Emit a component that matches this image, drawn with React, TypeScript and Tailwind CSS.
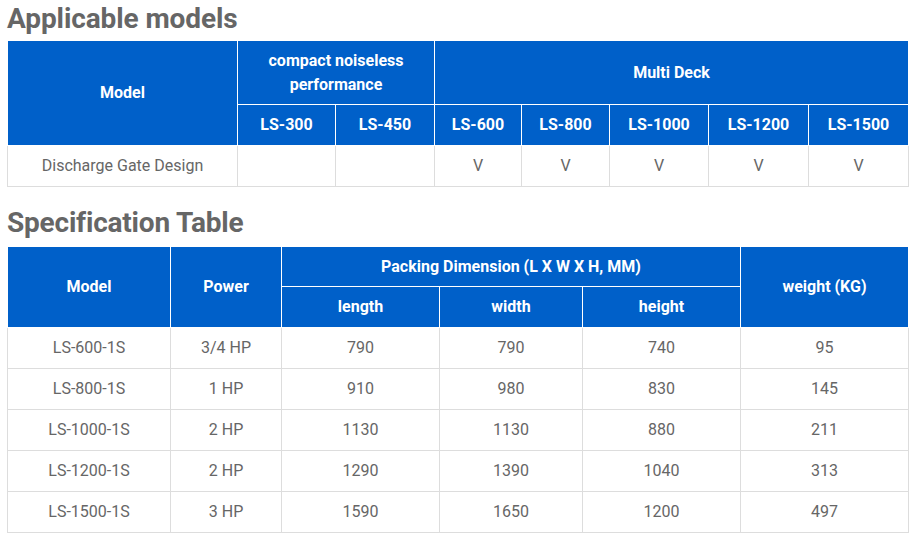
const th =
  "border border-white bg-[#0060c9] text-white font-bold text-[16px] leading-[24px] text-center align-middle px-2";
const td =
  "border border-[#dddddd] text-[#666666] text-[16px] leading-[24px] text-center align-middle px-2";

const models = ["LS-300", "LS-450", "LS-600", "LS-800", "LS-1000", "LS-1200", "LS-1500"];
const gate = ["", "", "V", "V", "V", "V", "V"];

const specs = [
  ["LS-600-1S", "3/4 HP", "790", "790", "740", "95"],
  ["LS-800-1S", "1 HP", "910", "980", "830", "145"],
  ["LS-1000-1S", "2 HP", "1130", "1130", "880", "211"],
  ["LS-1200-1S", "2 HP", "1290", "1390", "1040", "313"],
  ["LS-1500-1S", "3 HP", "1590", "1650", "1200", "497"],
];

export default function App() {
  return (
    <div className="min-h-screen bg-white px-[7px] pt-[2px] font-['Roboto',sans-serif]">
      {/* Applicable models */}
      <h2 className="text-[28px] leading-[34px] font-bold text-[#666666] tracking-[-0.1px] mb-[4px]">
        Applicable models
      </h2>
      <table className="w-[901px] table-fixed border-collapse border border-[#dddddd]">
        <colgroup>
          <col className="w-[230px]" />
          <col className="w-[98px]" />
          <col className="w-[99px]" />
          <col className="w-[87px]" />
          <col className="w-[88px]" />
          <col className="w-[99px]" />
          <col className="w-[100px]" />
          <col className="w-[100px]" />
        </colgroup>
        <thead>
          <tr className="h-[64px]">
            <th rowSpan={2} className={th}>
              Model
            </th>
            <th colSpan={2} className={th}>
              compact noiseless performance
            </th>
            <th colSpan={5} className={th}>
              Multi Deck
            </th>
          </tr>
          <tr className="h-[41px]">
            {models.map((m) => (
              <th key={m} className={th}>
                {m}
              </th>
            ))}
          </tr>
        </thead>
        <tbody>
          <tr className="h-[41px]">
            <td className={td}>Discharge Gate Design</td>
            {gate.map((g, i) => (
              <td key={i} className={td}>
                {g}
              </td>
            ))}
          </tr>
        </tbody>
      </table>

      {/* Specification Table */}
      <h2 className="text-[28px] leading-[34px] font-bold text-[#666666] tracking-[-0.2px] mt-[19px] mb-[6px]">
        Specification Table
      </h2>
      <table className="w-[901px] table-fixed border-collapse border border-[#dddddd]">
        <colgroup>
          <col className="w-[163px]" />
          <col className="w-[111px]" />
          <col className="w-[158px]" />
          <col className="w-[143px]" />
          <col className="w-[158px]" />
          <col className="w-[168px]" />
        </colgroup>
        <thead>
          <tr className="h-[40px]">
            <th rowSpan={2} className={th}>
              Model
            </th>
            <th rowSpan={2} className={th}>
              Power
            </th>
            <th colSpan={3} className={th}>
              Packing Dimension (L X W X H, MM)
            </th>
            <th rowSpan={2} className={th}>
              weight (KG)
            </th>
          </tr>
          <tr className="h-[41px]">
            <th className={th}>length</th>
            <th className={th}>width</th>
            <th className={th}>height</th>
          </tr>
        </thead>
        <tbody>
          {specs.map((row) => (
            <tr key={row[0]} className="h-[41px]">
              {row.map((c, i) => (
                <td key={i} className={td}>
                  {c}
                </td>
              ))}
            </tr>
          ))}
        </tbody>
      </table>
    </div>
  );
}
